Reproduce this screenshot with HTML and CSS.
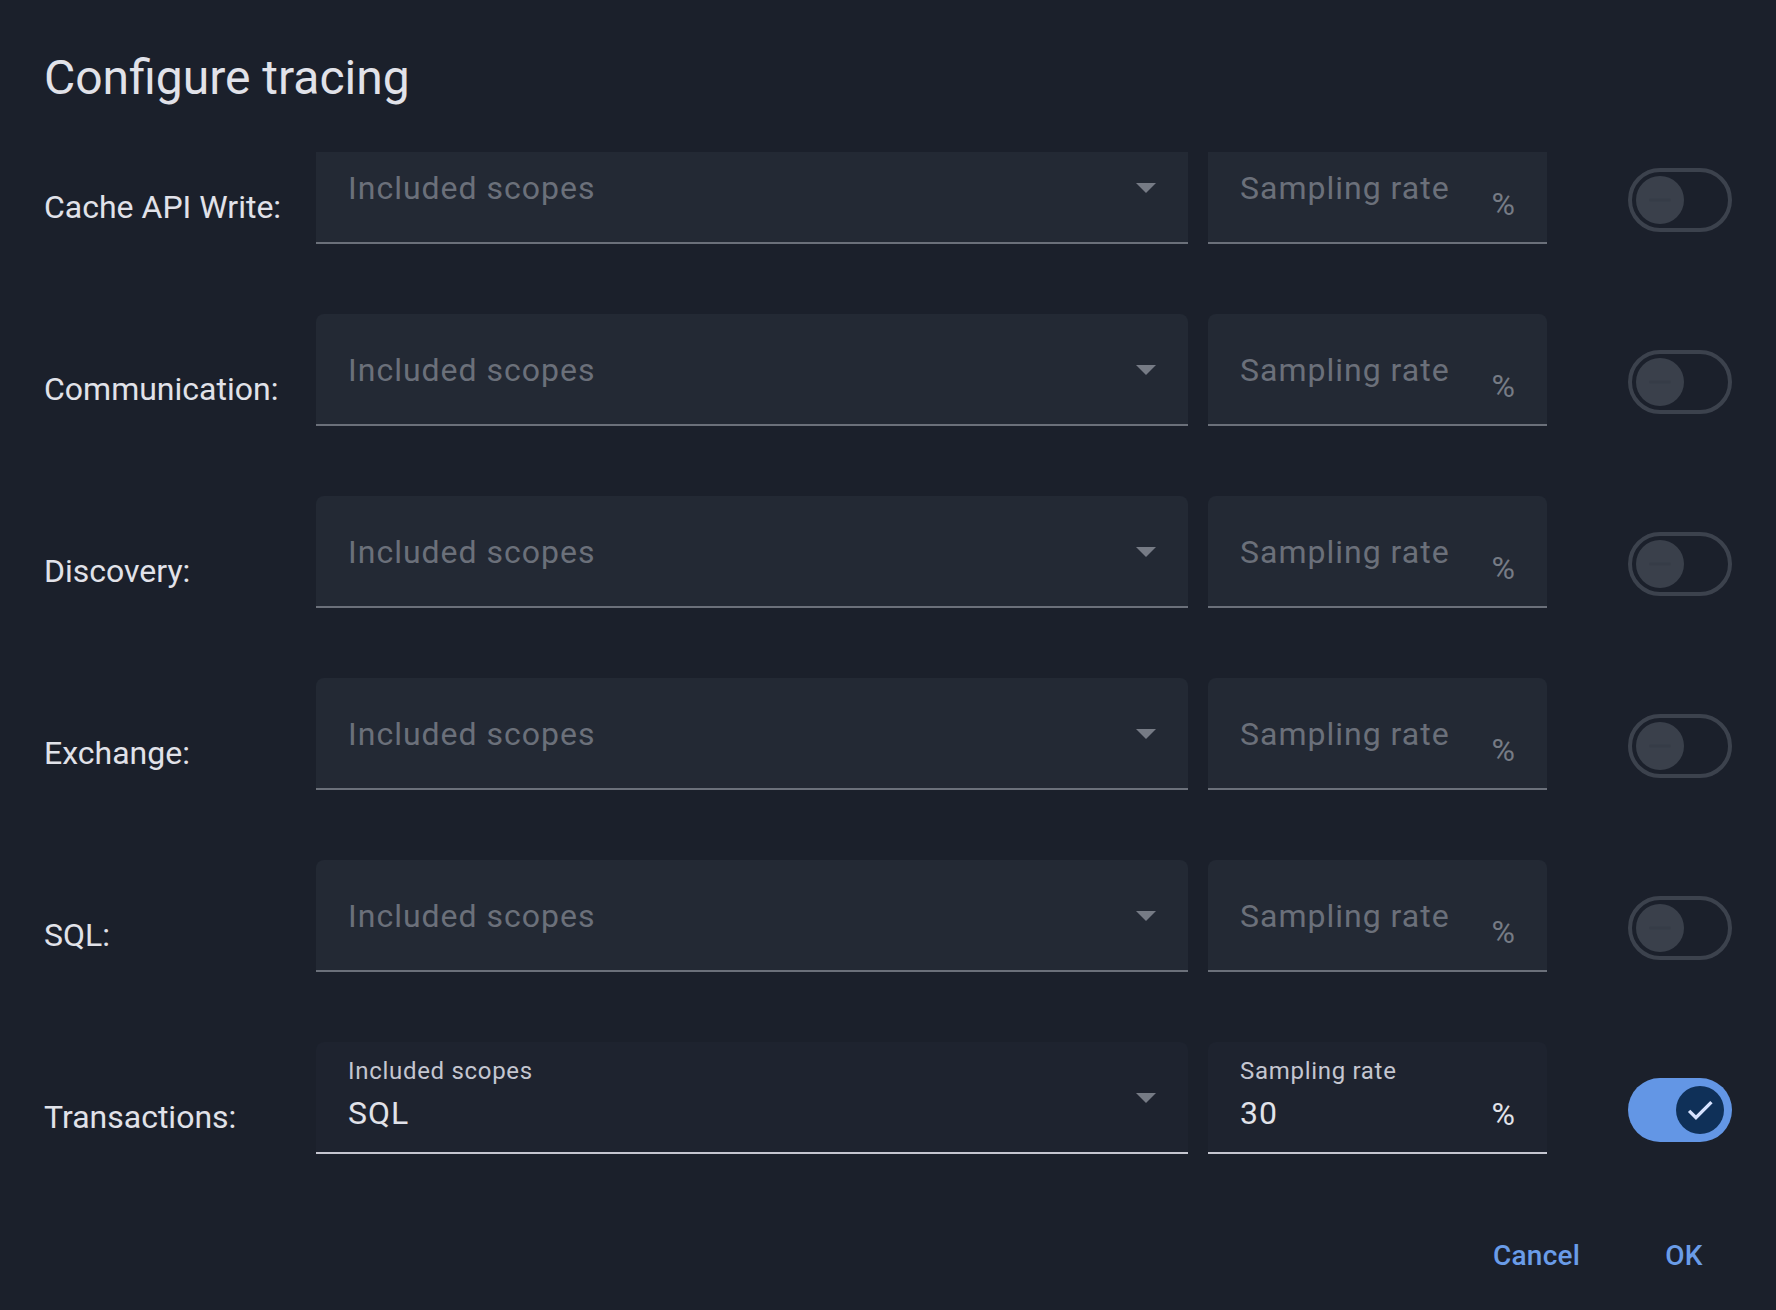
FILE: index.html
```html
<!DOCTYPE html>
<html lang="en">
<head>
<meta charset="utf-8">
<title>Configure tracing</title>
<link rel="stylesheet" href="styles.css">
</head>
<body>
<div class="dialog">
  <h1 class="title">Configure tracing</h1>
  <div class="content">
    <div class="rows">
      <div class="row">
        <div class="row-label">Cache API Write:</div>
        <div class="field field-select">
          <div class="field-main"><span class="placeholder">Included scopes</span></div>
          <svg class="arrow" viewBox="0 0 20 10" width="20" height="10"><polygon points="0,0 20,0 10,10"/></svg>
        </div>
        <div class="field field-rate">
          <div class="field-main"><span class="placeholder">Sampling rate</span></div>
          <span class="suffix">%</span>
        </div>
        <div class="switch"><span class="thumb"><svg class="icon" viewBox="0 0 24 24" width="32" height="32"><path d="M20 13H4v-2h16v2z"/></svg></span></div>
      </div>
      <div class="row">
        <div class="row-label">Communication:</div>
        <div class="field field-select">
          <div class="field-main"><span class="placeholder">Included scopes</span></div>
          <svg class="arrow" viewBox="0 0 20 10" width="20" height="10"><polygon points="0,0 20,0 10,10"/></svg>
        </div>
        <div class="field field-rate">
          <div class="field-main"><span class="placeholder">Sampling rate</span></div>
          <span class="suffix">%</span>
        </div>
        <div class="switch"><span class="thumb"><svg class="icon" viewBox="0 0 24 24" width="32" height="32"><path d="M20 13H4v-2h16v2z"/></svg></span></div>
      </div>
      <div class="row">
        <div class="row-label">Discovery:</div>
        <div class="field field-select">
          <div class="field-main"><span class="placeholder">Included scopes</span></div>
          <svg class="arrow" viewBox="0 0 20 10" width="20" height="10"><polygon points="0,0 20,0 10,10"/></svg>
        </div>
        <div class="field field-rate">
          <div class="field-main"><span class="placeholder">Sampling rate</span></div>
          <span class="suffix">%</span>
        </div>
        <div class="switch"><span class="thumb"><svg class="icon" viewBox="0 0 24 24" width="32" height="32"><path d="M20 13H4v-2h16v2z"/></svg></span></div>
      </div>
      <div class="row">
        <div class="row-label">Exchange:</div>
        <div class="field field-select">
          <div class="field-main"><span class="placeholder">Included scopes</span></div>
          <svg class="arrow" viewBox="0 0 20 10" width="20" height="10"><polygon points="0,0 20,0 10,10"/></svg>
        </div>
        <div class="field field-rate">
          <div class="field-main"><span class="placeholder">Sampling rate</span></div>
          <span class="suffix">%</span>
        </div>
        <div class="switch"><span class="thumb"><svg class="icon" viewBox="0 0 24 24" width="32" height="32"><path d="M20 13H4v-2h16v2z"/></svg></span></div>
      </div>
      <div class="row">
        <div class="row-label">SQL:</div>
        <div class="field field-select">
          <div class="field-main"><span class="placeholder">Included scopes</span></div>
          <svg class="arrow" viewBox="0 0 20 10" width="20" height="10"><polygon points="0,0 20,0 10,10"/></svg>
        </div>
        <div class="field field-rate">
          <div class="field-main"><span class="placeholder">Sampling rate</span></div>
          <span class="suffix">%</span>
        </div>
        <div class="switch"><span class="thumb"><svg class="icon" viewBox="0 0 24 24" width="32" height="32"><path d="M20 13H4v-2h16v2z"/></svg></span></div>
      </div>
      <div class="row">
        <div class="row-label">Transactions:</div>
        <div class="field field-select filled">
          <div class="field-main">
            <span class="float-label">Included scopes</span>
            <span class="value">SQL</span>
          </div>
          <svg class="arrow" viewBox="0 0 20 10" width="20" height="10"><polygon points="0,0 20,0 10,10"/></svg>
        </div>
        <div class="field field-rate filled">
          <div class="field-main">
            <span class="float-label">Sampling rate</span>
            <span class="value">30</span>
          </div>
          <span class="suffix">%</span>
        </div>
        <div class="switch on"><span class="thumb"><svg class="icon" viewBox="0 0 24 24" width="32" height="32"><path d="M19.69,5.23L8.96,15.96l-4.23-4.23L2.96,13.5l6,6L21.46,7L19.69,5.23z"/></svg></span></div>
      </div>
    </div>
  </div>
  <div class="actions">
    <button class="btn">Cancel</button>
    <button class="btn">OK</button>
  </div>
</div>
</body>
</html>
```

FILE: styles.css
```css
html, body {
  margin: 0;
  padding: 0;
  background: #1b202b;
}
body {
  font-family: Roboto, "Liberation Sans", sans-serif;
  color: #e1e2e9;
}
.dialog {
  display: flex;
  flex-direction: column;
  height: 1310px;
  overflow: hidden;
}
.title {
  margin: 46px 44px 0;
  font-size: 48px;
  line-height: 64px;
  font-weight: 400;
  color: #e1e2e9;
  height: 64px;
}
.content {
  margin-top: 42px;
  height: 1064px;
  overflow: hidden;
  padding: 0 44px;
  flex-shrink: 0;
}
.rows {
  margin-top: -20px;
  display: flex;
  flex-direction: column;
}
.row {
  display: flex;
  align-items: flex-start;
  height: 182px;
  flex-shrink: 0;
}
.row-label {
  width: 272px;
  flex-shrink: 0;
  margin-top: 51px;
  font-size: 32px;
  line-height: 48px;
  letter-spacing: 0;
  color: #e1e2e9;
}
.field {
  box-sizing: border-box;
  height: 112px;
  display: flex;
  align-items: flex-start;
  padding: 0 32px;
  background: #232934;
  border-radius: 8px 8px 0 0;
  border-bottom: 2px solid #6b707a;
  flex-shrink: 0;
}
.field.filled {
  background: #1e232f;
  border-bottom-color: #c5c6d0;
}
.field-select {
  width: 872px;
}
.field-rate {
  width: 339px;
  margin-left: 20px;
}
.field-main {
  flex: 1;
  display: flex;
  flex-direction: column;
  min-width: 0;
}
.placeholder {
  margin-top: 32px;
  font-size: 32px;
  line-height: 48px;
  letter-spacing: 1px;
  color: #6b707a;
  white-space: nowrap;
}
.float-label {
  margin-top: 13px;
  font-size: 24px;
  line-height: 32px;
  letter-spacing: 0.7px;
  color: #c4c6d0;
  white-space: nowrap;
}
.value {
  margin-top: 2px;
  font-size: 32px;
  line-height: 48px;
  letter-spacing: 1px;
  color: #e1e2e9;
}
.arrow {
  margin-top: 51px;
  fill: #767b85;
  flex-shrink: 0;
}
.suffix {
  margin-top: 48px;
  font-size: 32px;
  line-height: 48px;
  color: #767b85;
}
.filled .suffix {
  color: #e1e2e9;
}
.switch {
  box-sizing: border-box;
  width: 104px;
  height: 64px;
  margin-left: 81px;
  margin-top: 36px;
  border-radius: 32px;
  border: 4px solid #3c424d;
  display: flex;
  align-items: center;
  padding-left: 4px;
  flex-shrink: 0;
}
.switch .thumb {
  width: 48px;
  height: 48px;
  border-radius: 50%;
  background: #3a404b;
  display: flex;
  align-items: center;
  justify-content: center;
}
.switch .icon {
  fill: #363c47;
}
.switch.on {
  border: none;
  background: #6396e5;
  padding-left: 48px;
}
.switch.on .thumb {
  background: #0f3058;
}
.switch.on .icon {
  fill: #d7e3ff;
}
.actions {
  display: flex;
  justify-content: flex-end;
  gap: 16px;
  padding-right: 28px;
}
.btn {
  box-sizing: border-box;
  height: 80px;
  min-width: 128px;
  padding: 0 24px;
  border: none;
  background: transparent;
  color: #6a9ce8;
  font-family: Roboto, "Liberation Sans", sans-serif;
  font-size: 28px;
  line-height: 40px;
  font-weight: 500;
  letter-spacing: 0.2px;
  border-radius: 40px;
  cursor: pointer;
}
```
